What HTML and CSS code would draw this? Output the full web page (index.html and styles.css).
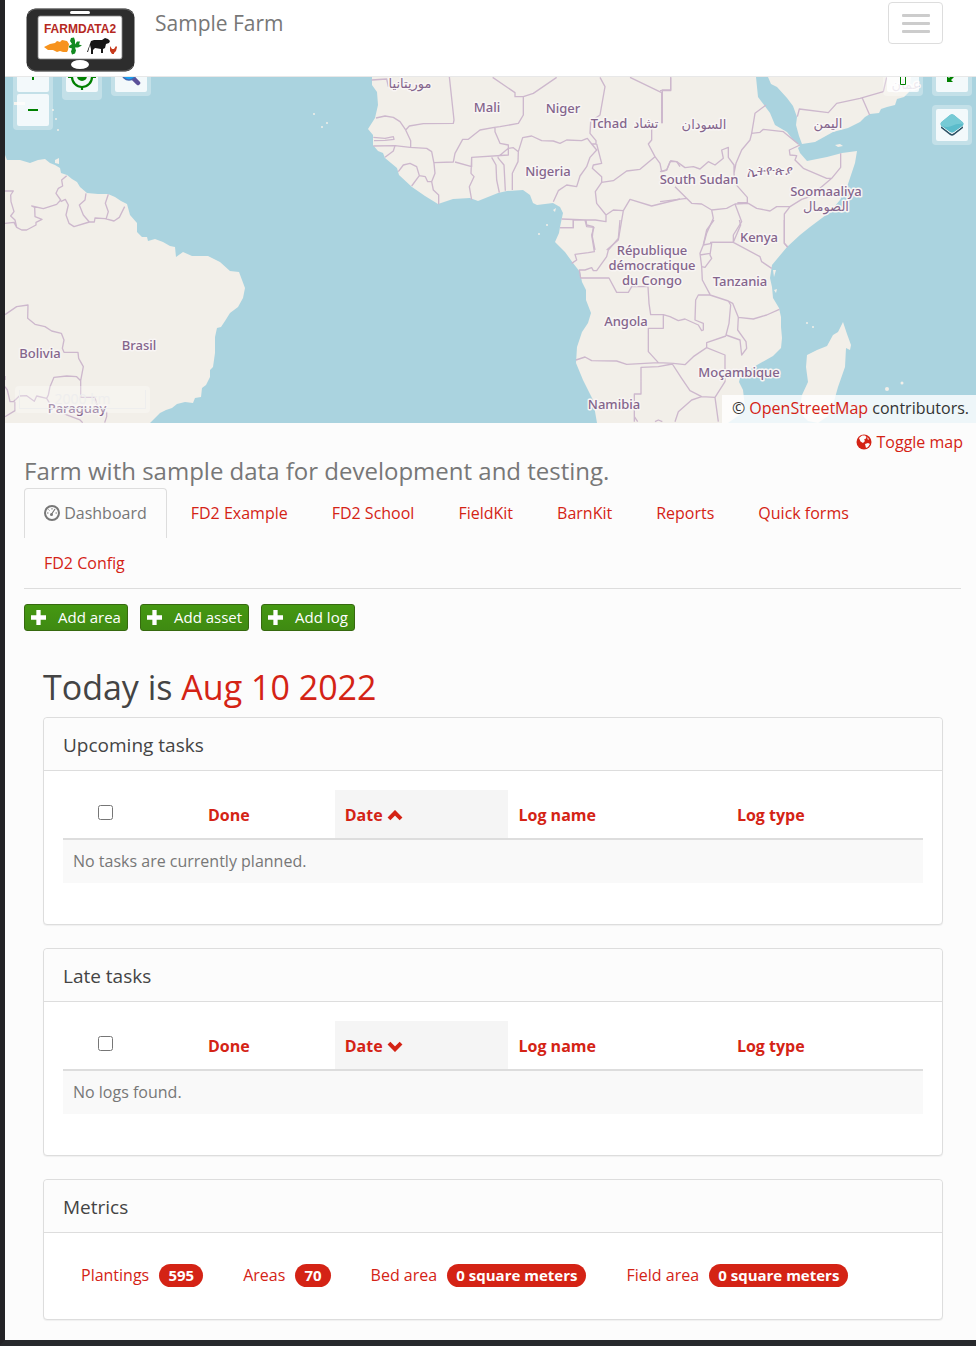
FILE: index.html
```html
<!DOCTYPE html>
<html lang="en">
<head>
<meta charset="utf-8">
<title>Sample Farm</title>
<link rel="stylesheet" href="styles.css">
</head>
<body>
<div class="page">
  <header class="navbar">
    <a class="brand" href="#" aria-label="Home">
      <svg class="logo" viewBox="26 8 109 64" role="img" aria-label="FarmData2">
        <rect x="26.500" y="8.500" width="108" height="63" rx="9" fill="#2d2d2d"/>
        <path d="M28 14q3-5 9-5h86q7 0 10 5M28 66q3 5 9 5h86q7 0 10-5" fill="none" stroke="#777" stroke-width=".7"/>
        <rect x="38" y="16" width="84" height="43" rx="2" fill="#fff" stroke="#888" stroke-width=".8"/>
        <rect x="70" y="11" width="20" height="3" rx="1.500" fill="#fff"/>
        <ellipse cx="80" cy="64.500" rx="9" ry="4.500" fill="#fff"/>
        <text class="logo-text" x="80" y="33" text-anchor="middle">FARMDATA2</text>
        <path d="M44 47l6-3 5-1 2-2 3 1 2-2 5 1 2 3-1 6-1 2-4 0-3-1-3 1-4-2-5 0z" fill="#f7931e"/>
        <path d="M69 46l3-2-2-3 1-3 3-.5 1 3v4l2-3h3l-1 3 3 1-4 2-3 0 1 3-1 3-3 1-1-3 1-3-3-1z" fill="#128a20"/>
        <path d="M91 41l3-1h8l3-2 3 1 2 2-1 2-3 1-1 4-2 1v4h-2v-4l-6-1-2 2v4h-2v-5l-1-4-2 7h-1z" fill="#171717"/>
        <path d="M110 46l2 3 2 0 2-3 1 1-1 4-2 2v1h-2l-2-3z" fill="#c73a1c"/>
      </svg>
    </a>
    <a class="site-name" href="#">Sample Farm</a>
    <button class="menu-toggle" type="button" aria-label="Toggle navigation"><span></span><span></span><span></span></button>
  </header>

  <section class="map" aria-label="Farm map">
    <svg class="map-canvas" viewBox="5 77 971 346" preserveAspectRatio="xMidYMid slice">
      <rect x="5" y="77" width="971" height="346" fill="#aad3df"/>
      <g class="land">
        <path d="M5 155L7 160 20 160 30 163 38 160 45 159 50 163 55 165 60 168 61 173 67 175 72 179 77 182 80 187 87 193 98 194 108 194 115 197 121 201 127 204 130 215 137 223 137 232 142 237 147 237 148 241 155 239 163 242 170 246 175 247 176 257 183 252 192 256 208 256 220 262 230 271 239 272 242 280 245 288 243 298 238 307 230 313 225 321 221 327 217 328 215 337 215 353 213 367 210 370 210 377 206 385 202 388 201 397 195 398 193 403 185 402 177 404 172 408 166 410 160 413 150 423H5z"/>
        <path d="M372 77V85L377 92 378 105 375 118 368 129 373 135 373 145 378 151 383 153 385 158 397 168 399 175 412 187 425 196 438 204 453 199 470 198 478 201 488 197 498 193 507 191 523 190 530 195 533 203 537 205 553 203 560 207 563 213 560 227 559 233 555 242 565 252 573 263 580 272 582 282 586 290 586 300 591 313 588 323 582 332 577 347 576 363 583 380 593 400 597 423H728L742 413 745 407 743 390 739 382 740 378 745 373 757 365 773 356 781 348 782 338 781 327 781 317 779 308 773 298 772 287 770 278 772 265 787 247 800 235 810 227 830 212 840 200 847 187 855 163 857 151 842 153 827 157 807 161 800 153 798 148 800 146 793 140 787 132 775 125 770 113 758 97 756 77z"/>
        <path d="M768 77L771 84 777 87 787 98 793 106 797 117 796 125 799 136 802 144 815 142 833 132 848 128 860 122 865 117 870 114 879 113 881 109 887 107 895 105 897 99 904 97 909 92 911 77z"/>
        <path d="M843 322L847 334 851 345 850 350 846 348 845 367 838 387 833 405 828 416 818 423 808 421 802 415 800 407 802 395 808 382 806 367 807 355 817 350 827 346 833 335 838 332z"/>
        <path d="M55 160l4-2v6l-4-1zM835 145l5-1 3 2-5 1zM553 210l3-2-1 4zM773 270l3 0-2 7zM774 290l3-1-1 4zM800 317l2 3zM14 102h11v3h-11z"/>
        <circle cx="539" cy="234" r="1"/><circle cx="547" cy="225" r="1"/><circle cx="887" cy="389" r="2"/><circle cx="902" cy="383" r="1.500"/><circle cx="53" cy="110" r="1"/><circle cx="56" cy="119" r="1"/><circle cx="58" cy="130" r="1"/><circle cx="322" cy="127" r="1"/><circle cx="327" cy="123" r="1"/><circle cx="314" cy="114" r="1"/><circle cx="807" cy="323" r="1"/><circle cx="813" cy="327" r="1"/>
      </g>
      <g class="borders" transform="translate(0 140) scale(.33333)">
        <path d="M15 153H40L32 165 33 185 42 215 32 228 45 240 50 262 65 270H80L108 255V247L126 238 105 230 104 202 95 198 130 206 170 193 182 180 168 160 175 145 188 138 185 120 200 107M15 250L42 247 50 262M182 185L196 178 205 195 198 225 207 250 222 260 268 246 250 225 238 195 255 180 258 160M268 246H283L285 234 315 236 342 243 358 232 374 200M325 163L316 190 325 215 318 238M15 524L50 500 84 495 83 535 105 553 135 560 155 573 184 580 192 600 187 625 192 637H234L236 655 250 680 242 722 230 710 200 708 162 712 150 740 145 765 140 775 110 768 103 784 80 767 58 768 40 785H30L22 750 15 740M45 785V812L15 830M242 722V772H285L292 800M140 775L155 800 200 825 240 840 248 848M320 815V830L314 848M15 708V720"/>
      </g>
      <g class="borders" transform="translate(360 70) scale(.33333)">
        <path d="M35 30L80 27 85 50M268 20L282 150 280 160 190 161 148 168 137 180 120 155 100 142 75 138 48 144M40 202L75 205 100 200 102 208 75 211 42 212M40 228L105 227 100 243 75 262M105 227L150 232 200 235 215 245 222 280 225 310 215 335H203L196 320 178 317 170 290 150 280 130 285 115 305M178 317L155 348M137 180L152 212V235M215 335L220 360 236 375V403M222 278L280 276 285 250 308 208 325 208 360 180 403 172 420 170 475 160 490 135V80L465 80V68L398 22M490 80L520 70 590 22M285 276L335 290V262L445 255V225L420 220 405 185V173M335 262L333 310 342 320 328 350 335 390M395 262L408 285 410 330 418 368M413 262L432 285 436 362M445 235L460 233 475 245 474 275 457 310V360M413 262L445 235M475 245L488 203 515 198 545 212 580 213 600 220 620 210 665 212 682 205 695 222 710 240 690 262 680 290 660 318 650 350 620 345 595 362 580 395M720 22L735 50 720 135 692 155 690 190 708 212V222L695 222M710 222L725 280 700 285 697 295 725 320V337L706 365 710 400 738 435V455L706 450 678 450 605 447M725 337L760 332 800 303 840 298 885 260 865 222 875 210V160M810 22L905 68V160M905 60H932V22M885 260L900 280 905 305 920 300 932 272 950 275 960 290M738 435L760 420 790 422 810 388 875 408 960 387M790 422L775 510 740 540M600 473H640V450M678 450L680 465 700 470 697 500 705 540"/>
      </g>
      <g class="borders" transform="translate(540 220) scale(.33333)">
        <path d="M100 0V23H60M135 0L140 20 162 22 155 45 163 95 145 98 105 103 110 120 95 130M240 0L235 55 205 90 200 110 170 152H160L155 143 135 150 118 150 122 174H207L230 217H265L275 200H324L327 250 332 284H370V325H325V395L355 428 260 433 230 423 155 422 135 411 108 420M370 284L390 290 415 302 435 297 475 315 485 332 490 330V310L465 300 467 240 475 225 510 225 565 243 572 255 567 310 558 345 600 360 605 405 620 385 618 365 593 330 595 292 578 250 565 243M510 223L487 180 485 140 480 100 490 75 515 70 510 105 515 115 495 142 485 140M480 105L510 100M490 75L500 30 522 0M515 67H580L602 15 598 0M580 67L660 110 665 125 695 145M733 0V70L743 80M595 292L640 297 680 285 718 268M558 348L500 368V383L555 405V485L525 532 485 530 450 512 425 475 397 432 355 440 303 442V522H283V605M355 428L400 430 435 434 460 410 500 383M485 530L455 540 415 575 405 605M525 532L535 605M283 590L293 605M345 605L355 600 367 605"/>
      </g>
      <g class="borders" transform="translate(660 70) scale(.33333)">
        <path d="M0 62H32V22M7 62V160M0 305L20 300 30 275 50 275 75 293 100 290 120 297 145 275 165 285 190 265 185 240 205 232V262L222 285V310L228 280 245 240 270 210 275 190 285 130 318 105M275 190L300 187 310 178 370 185 400 210 415 222M420 225L388 240 390 255 410 257 405 270 430 295 500 325 515 325 542 292V250M515 325L450 380 425 388 390 410 350 410 330 423 290 415 265 400 225 402 200 415 155 420 125 402 95 400 45 350M222 310L225 340 262 382V397L232 398M0 395L80 385 95 400M155 420L160 445 140 490 130 525M225 402L245 455 220 495V517H150M390 410L373 432V520L383 532M412 140L418 117 505 128 530 100 600 85 670 65 680 22M607 85L629 135"/>
      </g>
      <g class="labels">
        <text x="410" y="88" class="ar">موريتانيا</text><text x="487" y="112">Mali</text><text x="563" y="113">Niger</text>
        <text x="609" y="128">Tchad</text><text x="646" y="128" class="ar">تشاد</text><text x="704" y="129" class="ar">السودان</text><text x="828" y="128" class="ar">اليمن</text><text x="906" y="89" class="ar">عمان</text>
        <text x="548" y="176">Nigeria</text><text x="699" y="184">South Sudan</text><text x="770" y="175">ኢትዮጵያ</text><text x="826" y="196">Soomaaliya</text><text x="826" y="211" class="ar">الصومال</text>
        <text x="759" y="242">Kenya</text><text x="652" y="255">République</text><text x="652" y="270">démocratique</text><text x="652" y="285">du Congo</text><text x="740" y="286">Tanzania</text><text x="626" y="326">Angola</text><text x="739" y="377">Moçambique</text><text x="614" y="409">Namibia</text>
        <text x="139" y="350">Brasil</text><text x="40" y="358">Bolivia</text><text x="77" y="413">Paraguay</text>
      </g>
    </svg>
    <div class="controls controls-left">
      <div class="control">
        <button type="button" aria-label="Zoom in"><svg viewBox="0 0 32 32"><path d="M11 15h10M16 10v10" stroke="#008000" stroke-width="2"/></svg></button>
        <button type="button" aria-label="Zoom out"><svg viewBox="0 0 32 32"><path d="M11 16h10" stroke="#008000" stroke-width="2"/></svg></button>
      </div>
      <div class="control control-tall">
        <button type="button" aria-label="Find my location"><svg viewBox="0 0 32 32"><circle cx="16" cy="17" r="10" fill="none" stroke="#008000" stroke-width="2.200"/><circle cx="16" cy="16" r="5" fill="#008000"/><path d="M16 2v5M16 26v4M2 17h5M25 17h5" stroke="#008000" stroke-width="2.200"/></svg></button>
      </div>
      <div class="control">
        <button type="button" aria-label="Search"><svg viewBox="0 0 32 32"><path d="M18 18l5 5" stroke="#5b5199" stroke-width="4.500" stroke-linecap="round"/><circle cx="14" cy="13" r="7" fill="#1ba1f2" stroke="#4468b0" stroke-width="1.500"/></svg></button>
      </div>
    </div>
    <div class="controls controls-right">
      <div class="control"><button type="button" aria-label="Locate"><svg viewBox="0 0 32 32"><path d="M13.500 12.500h5v12h-5z" fill="none" stroke="#008000"/></svg></button></div>
      <div class="control-column">
        <div class="control"><button type="button" aria-label="Full screen"><svg viewBox="0 0 32 32"><path d="M11 22v-6l2 2 3-3 2 2-3 3 2 2zM21 8v6l-2-2-2 2-2-2 2-2-2-2z" fill="#008000"/></svg></button></div>
        <div class="control"><button type="button" aria-label="Map layers"><svg viewBox="0 0 32 32"><path d="M5 17l11 8 11-8v2l-9 7q-2 1.500-4 0l-9-7z" fill="#2d5265"/><path d="M5 15l11 8 11-8v2l-9 7q-2 1.500-4 0l-9-7z" fill="#fff"/><path d="M14 6q2-1.500 4 0l8.500 7q2 2 0 4L18 23q-2 1.500-4 0l-8.500-6q-2-2 0-4z" fill="#5bbccb"/><path d="M14 6q2-1.500 4 0l8.500 7q1 1 1 2-6-1-12 2-5 2-9 0-3-2-1-4z" fill="#76cad5"/></svg></button></div>
      </div>
    </div>
    <div class="scale"><span>2000 km</span></div>
    <div class="attribution">© <a href="#">OpenStreetMap</a> contributors.</div>
  </section>

  <main class="content">
    <a class="toggle-map" href="#">
      <svg class="icon" viewBox="0 0 16 16"><circle cx="8" cy="8" r="7.500" fill="currentColor"/><path d="M3 4l3-2.500h3L10.500 3l-1 2L8 5.500l1 1.500L7 9 4.500 7.500zM9 10l3-1 2 1-2 3-2 1zM11 3l2 2-1 1z" fill="#fcfcfc"/></svg>
      Toggle map</a>
    <p class="slogan">Farm with sample data for development and testing.</p>
    <nav class="tabs">
      <a class="active" href="#"><svg class="icon" viewBox="0 0 16 16"><circle cx="8" cy="8" r="7" fill="none" stroke="currentColor" stroke-width="2"/><path d="M7 10l4-6" stroke="currentColor" stroke-width="1.200"/><circle cx="7.500" cy="9.500" r="1.500" fill="currentColor"/><path d="M3 8h1.500M4.500 4.500l1 1M8 3v1.500M11.500 8H13" stroke="currentColor"/></svg> Dashboard</a>
      <a href="#">FD2 Example</a>
      <a href="#">FD2 School</a>
      <a href="#">FieldKit</a>
      <a href="#">BarnKit</a>
      <a href="#">Reports</a>
      <a href="#">Quick forms</a>
      <a href="#">FD2 Config</a>
    </nav>
    <div class="actions">
      <a class="btn" href="#"><svg viewBox="0 0 14 14"><path d="M5 0h4v5h5v4H9v5H5V9H0V5h5z" fill="#fff"/></svg>Add area</a>
      <a class="btn" href="#"><svg viewBox="0 0 14 14"><path d="M5 0h4v5h5v4H9v5H5V9H0V5h5z" fill="#fff"/></svg>Add asset</a>
      <a class="btn" href="#"><svg viewBox="0 0 14 14"><path d="M5 0h4v5h5v4H9v5H5V9H0V5h5z" fill="#fff"/></svg>Add log</a>
    </div>

    <div class="dashboard">
      <h2 class="today">Today is <a href="#">Aug 10 2022</a></h2>
      <section class="panel">
        <h3 class="panel-title">Upcoming tasks</h3>
        <div class="panel-body">
          <table class="logs">
            <thead><tr>
              <th class="col-check"><input type="checkbox" aria-label="Select all upcoming tasks"></th>
              <th class="col-done"><a href="#">Done</a></th>
              <th class="col-date"><a href="#">Date <svg class="chevron" viewBox="0 0 14 10"><path d="M1.500 8L7 2.500 12.500 8" fill="none" stroke="currentColor" stroke-width="3.600"/></svg></a></th>
              <th class="col-name"><a href="#">Log name</a></th>
              <th><a href="#">Log type</a></th>
            </tr></thead>
            <tbody><tr><td colspan="5">No tasks are currently planned.</td></tr></tbody>
          </table>
        </div>
      </section>
      <section class="panel">
        <h3 class="panel-title">Late tasks</h3>
        <div class="panel-body">
          <table class="logs">
            <thead><tr>
              <th class="col-check"><input type="checkbox" aria-label="Select all late tasks"></th>
              <th class="col-done"><a href="#">Done</a></th>
              <th class="col-date"><a href="#">Date <svg class="chevron" viewBox="0 0 14 10"><path d="M1.500 2L7 7.500 12.500 2" fill="none" stroke="currentColor" stroke-width="3.600"/></svg></a></th>
              <th class="col-name"><a href="#">Log name</a></th>
              <th><a href="#">Log type</a></th>
            </tr></thead>
            <tbody><tr><td colspan="5">No logs found.</td></tr></tbody>
          </table>
        </div>
      </section>
      <section class="panel">
        <h3 class="panel-title">Metrics</h3>
        <div class="metrics">
          <a href="#">Plantings <span class="badge">595</span></a>
          <a href="#">Areas <span class="badge">70</span></a>
          <a href="#">Bed area <span class="badge">0 square meters</span></a>
          <a href="#">Field area <span class="badge">0 square meters</span></a>
        </div>
      </section>
    </div>
  </main>
</div>
</body>
</html>
```
FILE: styles.css
```css
* { box-sizing: border-box; }
body {
  margin: 0;
  background: #27292c;
  color: #777;
  font: 16px/23px "Open Sans", "Noto Sans", sans-serif;
}
a { color: #d42315; text-decoration: none; }
button { font: inherit; cursor: pointer; }

.page {
  border-left: 5px solid #232326;
  border-bottom: 5px solid #27292c;
  background: #fcfcfc;
}

.navbar {
  display: flex;
  align-items: flex-start;
  height: 77px;
  padding: 0 33px 0 21px;
  background: #fff;
  border-bottom: 1px solid #e8e8e8;
}
.brand { padding-top: 8px; }
.logo { display: block; width: 109px; height: 64px; }
.logo-text {
  font: bold 12px "Liberation Sans", sans-serif;
  fill: #b5281e;
}
.site-name {
  margin: 8px auto 0 20px;
  color: #777;
  font-size: 21px;
  line-height: 30px;
}
.menu-toggle {
  display: flex;
  flex-direction: column;
  justify-content: center;
  align-items: center;
  gap: 5px;
  width: 55px;
  height: 42px;
  margin-top: 2px;
  background: #fff;
  border: 1px solid #ddd;
  border-radius: 4px;
}
.menu-toggle span {
  width: 28px;
  height: 3px;
  border-radius: 1px;
  background: #ccc;
}

.map { position: relative; height: 346px; overflow: hidden; }
.map-canvas { display: block; width: 100%; height: 100%; }
.land { fill: #f2efe9; }
.borders path { fill: none; stroke: #cdb8cd; stroke-width: 4; stroke-linejoin: round; }
.labels text {
  font: 500 13px "Noto Sans", "DejaVu Sans", sans-serif;
  fill: #84658c;
  stroke: #f8f5f4;
  stroke-width: 3px;
  stroke-linejoin: round;
  paint-order: stroke;
  text-anchor: middle;
}
.labels .ar { font-family: "DejaVu Sans", sans-serif; }

.controls { position: absolute; top: -21px; display: flex; align-items: flex-start; gap: 9px; }
.controls-left { left: 8px; }
.controls-right { right: 4px; }
.control-column { display: grid; gap: 9px; }
.control {
  display: grid;
  gap: 2px;
  padding: 4px;
  border-radius: 4px;
  background: rgba(255, 255, 255, .3);
}
.control-tall { padding-bottom: 8px; }
.control button {
  width: 32px;
  height: 32px;
  padding: 0;
  border: 0;
  border-radius: 2px;
  background: rgba(255, 255, 255, .8);
}
.control svg { display: block; width: 32px; height: 32px; }
.scale {
  position: absolute;
  left: 10px;
  bottom: 10px;
  width: 135px;
  padding: 4px;
  border-radius: 4px;
  background: rgba(255, 255, 255, .3);
}
.scale span {
  display: block;
  border: 1px solid #eee;
  border-top: 0;
  color: #eee;
  font-size: 14px;
  line-height: 18px;
  text-align: center;
}
.attribution {
  position: absolute;
  right: 0;
  bottom: 0;
  padding: 2px 7px 3px 10px;
  background: rgba(255, 255, 255, .8);
  color: #333;
}

.content {
  display: flex;
  flex-direction: column;
  padding: 8px 15px 20px 19px;
}
.icon { width: 16px; height: 16px; vertical-align: -2px; }
.toggle-map { align-self: flex-end; margin-right: -2px; }
.slogan { margin: 0 0 1px; font-size: 24px; line-height: 33px; }
.tabs {
  display: flex;
  flex-wrap: wrap;
  column-gap: 4px;
  border-bottom: 1px solid #ddd;
}
.tabs a { padding: 13px 19px; border: 1px solid transparent; height: 50px; }
.tabs .active {
  color: #777;
  border-color: #ddd;
  border-bottom: 0;
  border-radius: 4px 4px 0 0;
}
.actions { display: flex; gap: 12px; margin-top: 15px; }
.btn {
  display: flex;
  align-items: center;
  gap: 12px;
  height: 27px;
  padding: 0 6px;
  border: 1px solid #36690f;
  border-radius: 3px;
  background: linear-gradient(#459812, #3f8a12);
  color: #fff;
  font-size: 15px;
}
.btn svg { width: 15px; height: 15px; }

.dashboard { padding: 0 18px 0 19px; }
.today {
  margin: 33px 0 6px;
  color: #444;
  font-size: 34px;
  font-weight: 400;
  line-height: 47px;
}
.panel {
  background: #fff;
  border: 1px solid #ddd;
  border-radius: 4px;
  box-shadow: 0 1px 1px rgba(0, 0, 0, .05);
}
.panel + .panel { margin-top: 23px; }
.panel-title {
  margin: 0;
  padding: 16px 19px 14px;
  background: #fcfcfc;
  border-bottom: 1px solid #ddd;
  border-radius: 4px 4px 0 0;
  color: #444;
  font-size: 19px;
  font-weight: 400;
  line-height: 22px;
}
.panel-body { padding: 19px 19px 41px; }
.logs { width: 100%; table-layout: fixed; border-collapse: collapse; }
.logs th {
  height: 49px;
  padding: 13px 10px 11px;
  border-bottom: 2px solid #ddd;
  text-align: left;
  font-weight: 700;
}
.logs .col-check { width: 15.7%; padding: 15px 10px 10px 35px; vertical-align: top; }
.col-check input { display: block; width: 15px; height: 15px; margin: 0; }
.col-done { width: 15.9%; }
.col-date { width: 20.2%; background: #f5f5f5; }
.col-name { width: 25.4%; }
.chevron { width: 16px; height: 11px; }
.logs td { padding: 10px; background: #f9f9f9; }
.metrics { display: flex; flex-wrap: wrap; gap: 8px 40px; padding: 31px 37px 32px; }
.badge {
  display: inline-block;
  margin-left: 6px;
  padding: 0 9px;
  border-radius: 12px;
  background: #d42315;
  color: #fff;
  font-size: 15px;
  font-weight: 700;
}
```
